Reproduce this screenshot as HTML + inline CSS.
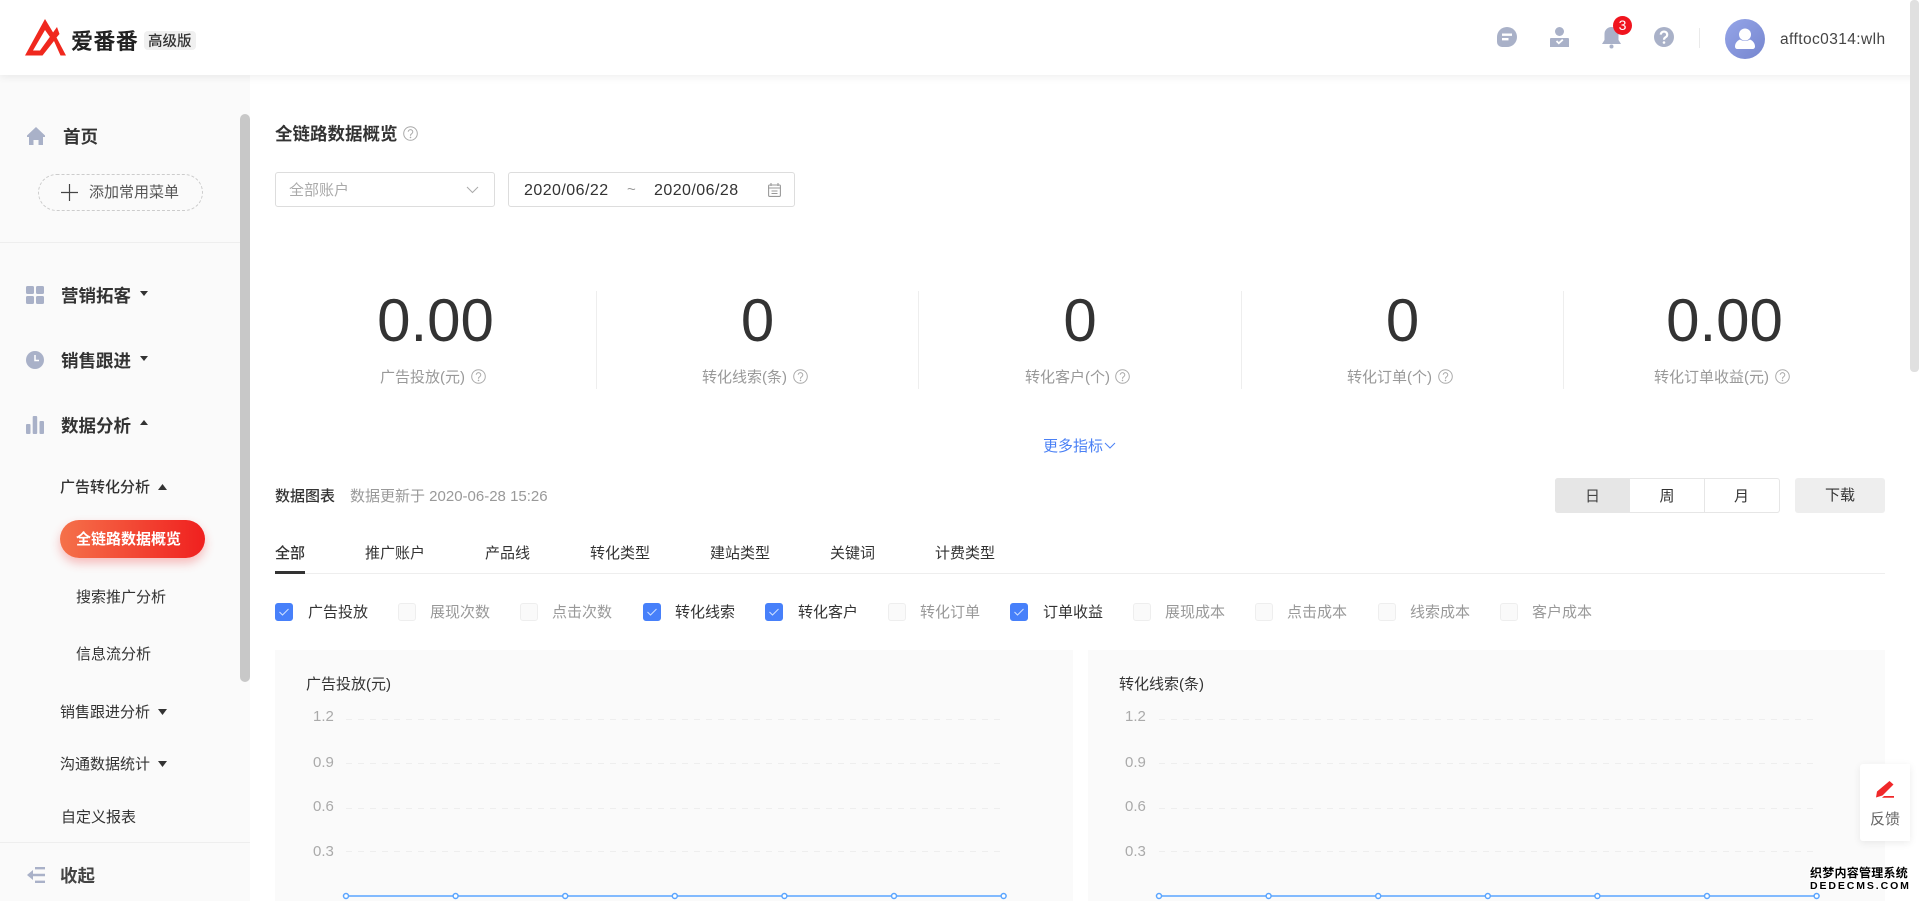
<!DOCTYPE html>
<html lang="zh-CN"><head><meta charset="utf-8"><title>全链路数据概览</title>
<style>
html,body{margin:0;padding:0;width:1919px;height:901px;overflow:hidden;background:#fff}
body{position:relative;font-family:"Liberation Sans","Noto Sans CJK SC",sans-serif;color:#333;font-size:15px}
div,span,svg{position:absolute;box-sizing:border-box}
.t{white-space:nowrap;line-height:20px;height:20px}
.b{font-weight:700}
.m{font-weight:500}
.g{color:#999}
.l{font-size:17.5px;font-weight:700;color:#333}
.cb{width:18px;height:18px;top:603px;border-radius:3px;border:1px solid #eee;background:#fafafa}
.cb.on{background:#4780fa;border-color:#4780fa}
.cb.on svg{left:3px;top:4px}
.yl{color:#aaa;font-size:15px}
.wm{text-shadow:1px 0 0 #fff,-1px 0 0 #fff,0 1px 0 #fff,0 -1px 0 #fff,1px 1px 0 #fff,-1px -1px 0 #fff,1px -1px 0 #fff,-1px 1px 0 #fff}
</style></head><body>

<!-- sidebar -->
<div style="left:0;top:75px;width:250px;height:826px;background:#fafafa"></div>
<div style="left:240px;top:114px;width:10px;height:568px;background:#c8c8c8;border-radius:5px"></div>

<!-- header -->
<div style="left:0;top:0;width:1919px;height:75px;background:#fff;box-shadow:0 2px 8px rgba(0,0,0,.07)"></div>
<svg style="left:25px;top:19px" width="42" height="37" viewBox="25 19 42 37"><path fill="#f0281e" d="M25 55.500L45 19l9 15-3 4.500L45 30 33 50.500h7L57 27l2.500 7-3 3.500 9.500 18h-5.500L54 41 42.500 55.500z"/></svg>
<div class="t b" style="left:71px;top:32px;font-size:22px;color:#222;letter-spacing:.4px">爱番番</div>
<div style="left:144px;top:31px;width:52px;height:19px;background:#f0f0f0;border-radius:4px"></div>
<div class="t m" style="left:148px;top:32px;font-size:14.5px;color:#333">高级版</div>

<!-- header icons -->
<svg style="left:1497px;top:27px" width="20" height="20" viewBox="0 0 20 20"><path fill="#a9b1c8" d="M10 0a10 10 0 0 1 0 20H5a5 5 0 0 1-5-5V10A10 10 0 0 1 10 0z"/><path fill="#fff" d="M5 6.500h10v2.400H5zM5 11h6.500v2.400H5z"/></svg>
<svg style="left:1550px;top:27px" width="19" height="20" viewBox="0 0 19 20"><circle cx="9.500" cy="4.500" r="4.500" fill="#a9b1c8"/><path fill="#a9b1c8" d="M1 11h17a1 1 0 0 1 1 1v8H0v-8a1 1 0 0 1 1-1z"/><path fill="none" stroke="#fff" stroke-width="1.800" d="M6.500 14l2.300 2.300 4-3.600"/></svg>
<svg style="left:1602px;top:26px" width="19" height="23" viewBox="0 0 19 23"><path fill="#a9b1c8" d="M9.500 1a7 7 0 0 1 7 7v6l2.500 4H0l2.500-4V8a7 7 0 0 1 7-7z"/><circle cx="9.500" cy="20.500" r="2" fill="#a9b1c8"/></svg>
<div style="left:1613px;top:16px;width:19px;height:19px;background:#f0141e;border-radius:50%;color:#fff;font-size:14px;line-height:19px;text-align:center">3</div>
<svg style="left:1654px;top:27px" width="20" height="20" viewBox="0 0 20 20"><circle cx="10" cy="10" r="10" fill="#a9b1c8"/><path fill="none" stroke="#fff" stroke-width="2.200" d="M6.800 7.600a3.200 3 0 1 1 4.800 2.600c-1 .6-1.600 1.200-1.600 2.600"/><circle cx="10" cy="15.500" r="1.300" fill="#fff"/></svg>
<div style="left:1699px;top:28px;width:1px;height:20px;background:#eaeaea"></div>
<div style="left:1725px;top:19px;width:40px;height:40px;border-radius:50%;background:linear-gradient(135deg,#95a5e8,#7686cf)"></div>
<svg style="left:1735px;top:28px" width="20" height="21" viewBox="0 0 20 21"><circle cx="10" cy="6.500" r="6" fill="#fff"/><path fill="#fff" d="M5 11.500c3 2 7 2 10 0 2.500 1 5 3.500 5 7 0 1.500-1 2.500-2.500 2.500h-15C1 21 0 20 0 18.500c0-3.500 2.500-6 5-7z"/></svg>
<div class="t" style="left:1780px;top:30px;font-size:15.500px;color:#444;letter-spacing:.42px">afftoc0314:wlh</div>

<!-- page scrollbar -->
<div style="left:1910px;top:0;width:9px;height:372px;background:#e0e0e0;border-radius:4px"></div>

<!-- sidebar items -->
<svg style="left:27px;top:127px" width="18" height="18" viewBox="0 0 18 18"><path fill="#a9b1c8" d="M9 0l9 8.500v1.500h-2v8h-4.500v-5h-5v5H2v-8H0V8.500z"/></svg>
<div class="t l" style="left:63px;top:127px">首页</div>
<div style="left:38px;top:174px;width:165px;height:37px;border:1px dashed #ccc;border-radius:19px"></div>
<svg style="left:61px;top:184px" width="17" height="17"><path stroke="#444" stroke-width="1.200" d="M8.500 0v17M0 8.500h17"/></svg>
<div class="t" style="left:89px;top:183px;color:#555">添加常用菜单</div>
<div style="left:0;top:242px;width:240px;height:1px;background:#eee"></div>

<svg style="left:26px;top:286px" width="18" height="18"><rect width="8" height="8" rx="1.500" fill="#a9b1c8"/><rect x="10" width="8" height="8" rx="1.500" fill="#a9b1c8"/><rect y="10" width="8" height="8" rx="1.500" fill="#a9b1c8"/><rect x="10" y="10" width="8" height="8" rx="1.500" fill="#a9b1c8"/></svg>
<div class="t l" style="left:61px;top:286px">营销拓客</div>
<svg style="left:140px;top:291px" width="8" height="6"><path d="M0 0h8L4 5z" fill="#333"/></svg>

<svg style="left:26px;top:351px" width="18" height="18" viewBox="0 0 18 18"><circle cx="9" cy="9" r="9" fill="#a9b1c8"/><path fill="none" stroke="#fff" stroke-width="1.500" d="M9 4v5.500h4"/></svg>
<div class="t l" style="left:61px;top:351px">销售跟进</div>
<svg style="left:140px;top:356px" width="8" height="6"><path d="M0 0h8L4 5z" fill="#333"/></svg>

<svg style="left:26px;top:416px" width="18" height="18"><rect y="8" width="4.500" height="10" rx="1" fill="#a9b1c8"/><rect x="6.700" width="4.500" height="18" rx="1" fill="#a9b1c8"/><rect x="13.500" y="5" width="4.500" height="13" rx="1" fill="#a9b1c8"/></svg>
<div class="t l" style="left:61px;top:416px">数据分析</div>
<svg style="left:140px;top:420px" width="8" height="6"><path d="M0 5h8L4 0z" fill="#333"/></svg>

<div class="t m" style="left:60px;top:478px">广告转化分析</div>
<svg style="left:158px;top:484px" width="9" height="6"><path d="M0 6h9L4.500 0z" fill="#333"/></svg>
<div style="left:60px;top:520px;width:145px;height:38px;border-radius:19px;background:linear-gradient(90deg,#f5714a,#f0201f);box-shadow:0 5px 10px rgba(240,40,40,.3)"></div>
<div class="t b" style="left:76px;top:530px;color:#fff">全链路数据概览</div>
<div class="t" style="left:76px;top:588px">搜索推广分析</div>
<div class="t" style="left:76px;top:645px">信息流分析</div>
<div class="t" style="left:60px;top:703px">销售跟进分析</div>
<svg style="left:158px;top:709px" width="9" height="6"><path d="M0 0h9L4.500 6z" fill="#333"/></svg>
<div class="t" style="left:60px;top:755px">沟通数据统计</div>
<svg style="left:158px;top:761px" width="9" height="6"><path d="M0 0h9L4.500 6z" fill="#333"/></svg>
<div class="t" style="left:61px;top:808px">自定义报表</div>
<div style="left:0;top:842px;width:250px;height:1px;background:#eee"></div>
<svg style="left:27px;top:867px" width="18" height="16" viewBox="0 0 18 16"><path stroke="#a9b1c8" stroke-width="2.400" fill="none" d="M8 1.200h10M1.500 8H18M8 14.800h10"/><path fill="#a9b1c8" d="M0 8l6-5v10z"/></svg>
<div class="t l" style="left:60px;top:866px;color:#444">收起</div>

<!-- title -->
<div class="t b" style="left:275px;top:124px;font-size:17.500px">全链路数据概览</div>
<svg style="left:403px;top:126px" width="15" height="15" viewBox="0 0 15 15"><circle cx="7.500" cy="7.500" r="6.800" fill="none" stroke="#aaa"/><path fill="none" stroke="#aaa" d="M5.200 5.800a2.300 2.200 0 1 1 3.500 1.900c-.8.500-1.200 1-1.200 2"/><circle cx="7.500" cy="11.400" r=".8" fill="#aaa"/></svg>

<!-- filters -->
<div style="left:275px;top:172px;width:220px;height:35px;border:1px solid #ddd;border-radius:3px"></div>
<div class="t" style="left:289px;top:181px;color:#aaa">全部账户</div>
<svg style="left:466px;top:186px" width="13" height="8"><path d="M1 1l5.500 5.500L12 1" fill="none" stroke="#aaa"/></svg>
<div style="left:508px;top:172px;width:287px;height:35px;border:1px solid #ddd;border-radius:3px"></div>
<div class="t" style="left:524px;top:181px;font-size:16px;letter-spacing:.45px;color:#333">2020/06/22</div>
<div class="t" style="left:627px;top:180px;color:#999">~</div>
<div class="t" style="left:654px;top:181px;font-size:16px;letter-spacing:.45px;color:#333">2020/06/28</div>
<svg style="left:768px;top:183px" width="13" height="14" viewBox="0 0 13 14"><rect x=".6" y="2" width="11.800" height="11.400" rx="1" fill="none" stroke="#999" stroke-width="1.100"/><path stroke="#999" stroke-width="1.100" d="M0 5h13M3 0v3M10 0v3M3.500 8h6M3.500 10.500h6"/></svg>

<!-- stats -->
<div style="left:596px;top:291px;width:1px;height:98px;background:#eee"></div>
<div style="left:918px;top:291px;width:1px;height:98px;background:#eee"></div>
<div style="left:1241px;top:291px;width:1px;height:98px;background:#eee"></div>
<div style="left:1563px;top:291px;width:1px;height:98px;background:#eee"></div>

<div class="t" style="left:275px;width:321px;top:286px;height:70px;line-height:70px;font-size:60px;text-align:center">0.00</div>
<div class="t" style="left:597px;width:321px;top:286px;height:70px;line-height:70px;font-size:60px;text-align:center">0</div>
<div class="t" style="left:919px;width:322px;top:286px;height:70px;line-height:70px;font-size:60px;text-align:center">0</div>
<div class="t" style="left:1242px;width:321px;top:286px;height:70px;line-height:70px;font-size:60px;text-align:center">0</div>
<div class="t" style="left:1564px;width:321px;top:286px;height:70px;line-height:70px;font-size:60px;text-align:center">0.00</div>

<div class="t g" style="left:380px;top:368px">广告投放(元)</div>
<div class="t g" style="left:702px;top:368px">转化线索(条)</div>
<div class="t g" style="left:1025px;top:368px">转化客户(个)</div>
<div class="t g" style="left:1347px;top:368px">转化订单(个)</div>
<div class="t g" style="left:1654px;top:368px">转化订单收益(元)</div>
<svg style="left:471px;top:369px" width="15" height="15" viewBox="0 0 15 15"><use href="#q"/></svg>
<svg style="left:793px;top:369px" width="15" height="15" viewBox="0 0 15 15"><use href="#q"/></svg>
<svg style="left:1115px;top:369px" width="15" height="15" viewBox="0 0 15 15"><use href="#q"/></svg>
<svg style="left:1438px;top:369px" width="15" height="15" viewBox="0 0 15 15"><use href="#q"/></svg>
<svg style="left:1775px;top:369px" width="15" height="15" viewBox="0 0 15 15"><use href="#q"/></svg>
<svg width="0" height="0" style="left:0;top:0"><defs><g id="q"><circle cx="7.500" cy="7.500" r="6.800" fill="none" stroke="#aaa"/><path fill="none" stroke="#aaa" d="M5.200 5.800a2.300 2.200 0 1 1 3.500 1.900c-.8.500-1.200 1-1.200 2"/><circle cx="7.500" cy="11.400" r=".8" fill="#aaa"/></g></defs></svg>

<div class="t" style="left:1043px;top:437px;color:#4a80f5">更多指标</div>
<svg style="left:1104px;top:442px" width="12" height="7"><path d="M1 1l5 5 5-5" fill="none" stroke="#4a80f5"/></svg>

<!-- section -->
<div class="t m" style="left:275px;top:487px">数据图表</div>
<div class="t g" style="left:350px;top:487px;font-size:15px">数据更新于 2020-06-28 15:26</div>
<div style="left:1555px;top:478px;width:225px;height:35px;border:1px solid #e6e6e6;border-radius:3px"></div>
<div style="left:1555px;top:478px;width:75px;height:35px;background:#e6e6e6;border-radius:3px 0 0 3px"></div>
<div style="left:1704px;top:479px;width:1px;height:33px;background:#e6e6e6"></div>
<div class="t" style="left:1555px;width:75px;top:487px;text-align:center;color:#444">日</div>
<div class="t" style="left:1630px;width:74px;top:487px;text-align:center">周</div>
<div class="t" style="left:1704px;width:75px;top:487px;text-align:center">月</div>
<div style="left:1795px;top:478px;width:90px;height:35px;background:#eee;border-radius:3px"></div>
<div class="t" style="left:1795px;width:90px;top:486px;text-align:center">下载</div>

<!-- tabs -->
<div class="t m" style="left:275px;top:544px">全部</div>
<div class="t" style="left:365px;top:544px">推广账户</div>
<div class="t" style="left:485px;top:544px">产品线</div>
<div class="t" style="left:590px;top:544px">转化类型</div>
<div class="t" style="left:710px;top:544px">建站类型</div>
<div class="t" style="left:830px;top:544px">关键词</div>
<div class="t" style="left:935px;top:544px">计费类型</div>
<div style="left:275px;top:573px;width:1610px;height:1px;background:#eee"></div>
<div style="left:275px;top:571px;width:30px;height:3px;background:#333"></div>

<!-- checkboxes -->
<div class="cb on" style="left:275px"><svg width="10" height="8"><path d="M.5 4l3 3 6-6" fill="none" stroke="#cfe0ff" stroke-width="1"/></svg></div>
<div class="t" style="left:308px;top:603px">广告投放</div>
<div class="cb" style="left:398px"></div><div class="t g" style="left:430px;top:603px">展现次数</div>
<div class="cb" style="left:520px"></div><div class="t g" style="left:552px;top:603px">点击次数</div>
<div class="cb on" style="left:643px"><svg width="10" height="8"><path d="M.5 4l3 3 6-6" fill="none" stroke="#cfe0ff"/></svg></div>
<div class="t" style="left:675px;top:603px">转化线索</div>
<div class="cb on" style="left:765px"><svg width="10" height="8"><path d="M.5 4l3 3 6-6" fill="none" stroke="#cfe0ff"/></svg></div>
<div class="t" style="left:798px;top:603px">转化客户</div>
<div class="cb" style="left:888px"></div><div class="t g" style="left:920px;top:603px">转化订单</div>
<div class="cb on" style="left:1010px"><svg width="10" height="8"><path d="M.5 4l3 3 6-6" fill="none" stroke="#cfe0ff"/></svg></div>
<div class="t" style="left:1043px;top:603px">订单收益</div>
<div class="cb" style="left:1133px"></div><div class="t g" style="left:1165px;top:603px">展现成本</div>
<div class="cb" style="left:1255px"></div><div class="t g" style="left:1287px;top:603px">点击成本</div>
<div class="cb" style="left:1378px"></div><div class="t g" style="left:1410px;top:603px">线索成本</div>
<div class="cb" style="left:1500px"></div><div class="t g" style="left:1532px;top:603px">客户成本</div>

<!-- charts -->
<div style="left:275px;top:650px;width:798px;height:251px;background:#fafafa"></div>
<div style="left:1088px;top:650px;width:797px;height:251px;background:#fafafa"></div>
<div class="t" style="left:306px;top:675px">广告投放(元)</div>
<div class="t" style="left:1119px;top:675px">转化线索(条)</div>
<div class="t yl" style="left:313px;top:707px">1.2</div><div class="t yl" style="left:313px;top:753px">0.9</div><div class="t yl" style="left:313px;top:797px">0.6</div><div class="t yl" style="left:313px;top:842px">0.3</div>
<div class="t yl" style="left:1125px;top:707px">1.2</div><div class="t yl" style="left:1125px;top:753px">0.9</div><div class="t yl" style="left:1125px;top:797px">0.6</div><div class="t yl" style="left:1125px;top:842px">0.3</div>

<svg style="left:0;top:0" width="1919" height="901">
<g stroke="#eee" stroke-width="1" stroke-dasharray="6 6">
<path d="M346 719.500H1004M346 763.500H1004M346 808.500H1004M346 851.500H1004"/>
<path d="M1159 719.500H1817M1159 763.500H1817M1159 808.500H1817M1159 851.500H1817"/>
</g>
<g stroke="#5aa5ff" stroke-width="1.500" fill="none"><path d="M346 896H1004M1159 896H1817"/></g>
<g stroke="#5aa5ff" stroke-width="1.500" fill="#fff">
<circle cx="346" cy="896" r="2.500"/><circle cx="455.600" cy="896" r="2.500"/><circle cx="565.200" cy="896" r="2.500"/><circle cx="674.800" cy="896" r="2.500"/><circle cx="784.400" cy="896" r="2.500"/><circle cx="894" cy="896" r="2.500"/><circle cx="1003.600" cy="896" r="2.500"/>
<circle cx="1159" cy="896" r="2.500"/><circle cx="1268.600" cy="896" r="2.500"/><circle cx="1378.200" cy="896" r="2.500"/><circle cx="1487.800" cy="896" r="2.500"/><circle cx="1597.400" cy="896" r="2.500"/><circle cx="1707" cy="896" r="2.500"/><circle cx="1816.600" cy="896" r="2.500"/>
</g></svg>

<!-- feedback -->
<div style="left:1860px;top:764px;width:50px;height:77px;background:#fff;border-radius:3px 0 0 3px;box-shadow:0 2px 8px rgba(0,0,0,.08)"></div>
<svg style="left:1876px;top:781px" width="18" height="18" viewBox="0 0 18 18"><path fill="#f0282a" d="M13.500 0L17.500 3.500 6.500 14.500 0 16.500 1 10.500zM8 15h10v1.800H6z"/></svg>
<div class="t" style="left:1870px;top:810px;color:#666">反馈</div>

<!-- watermark -->
<div class="t b wm" style="left:1810px;top:867px;width:98px;font-size:12px;height:13px;line-height:13px;color:#000;letter-spacing:.25px">织梦内容管理系统</div>
<div class="t b wm" style="left:1810px;top:880px;width:98px;font-size:10.500px;height:12px;line-height:12px;color:#000;letter-spacing:1.900px">DEDECMS.COM</div>

</body></html>
